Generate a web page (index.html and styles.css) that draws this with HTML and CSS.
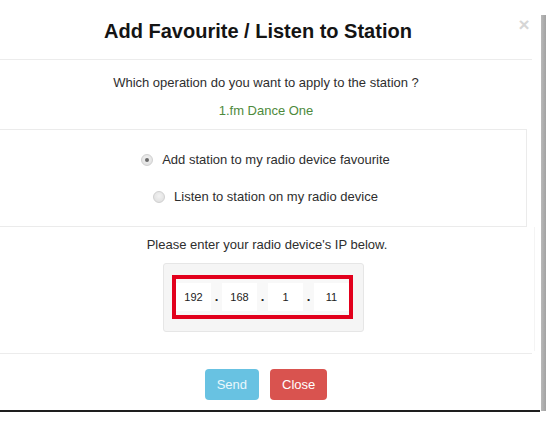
FILE: index.html
```html
<!DOCTYPE html>
<html lang="en">
<head>
<meta charset="utf-8">
<title>Add Favourite / Listen to Station</title>
<link rel="stylesheet" href="styles.css">
</head>
<body>
<div class="screen">
  <div class="modal">
    <div class="modal-header">
      <h4 class="modal-title">Add Favourite / Listen to Station</h4>
      <span class="close">&times;</span>
    </div>
    <div class="intro">
      <p class="question">Which operation do you want to apply to the station ?</p>
      <p class="station">1.fm Dance One</p>
    </div>
    <div class="options">
      <div class="option"><span class="radio checked"></span><span>Add station to my radio device favourite</span></div>
      <div class="option"><span class="radio"></span><span>Listen to station on my radio device</span></div>
    </div>
    <div class="ip-section">
      <p class="ip-label">Please enter your radio device's IP below.</p>
      <div class="well">
        <div class="ip-box">
          <span class="octet">192</span><span class="dot">.</span><span class="octet">168</span><span class="dot">.</span><span class="octet">1</span><span class="dot">.</span><span class="octet">11</span>
        </div>
      </div>
    </div>
    <div class="modal-footer">
      <span class="btn btn-info">Send</span>
      <span class="btn btn-danger">Close</span>
    </div>
  </div>
  <div class="scrollbar"></div>
</div>
</body>
</html>
```
FILE: styles.css
```css
html, body {
  margin: 0;
  padding: 0;
  background: #ffffff;
}
body {
  font-family: "Liberation Sans", Arial, sans-serif;
  color: #333333;
  font-size: 13px;
}
.screen {
  display: flex;
  width: 554px;
  height: 426px;
  overflow: hidden;
}
.modal {
  width: 540px;
  height: 410px;
  display: flex;
  flex-direction: column;
  border-bottom: 2px solid #1e1e1e;
  box-sizing: content-box;
}
.modal > * {
  width: 532px;
  box-sizing: border-box;
}
.scrollbar {
  width: 5px;
  height: 396px;
  margin-top: 15px;
  margin-left: 1px;
  background: linear-gradient(to right, #b9b9b9, #a2a2a2);
}
.modal-header {
  height: 60px;
  display: flex;
  align-items: flex-start;
  border-bottom: 1px solid #ececec;
}
.modal-title {
  flex: 1;
  margin: 20px 0 0;
  font-size: 20px;
  line-height: 22px;
  font-weight: bold;
  color: #141414;
  text-align: center;
}
.close {
  width: 16px;
  margin-top: 14px;
  font-size: 19px;
  line-height: 21px;
  font-weight: bold;
  color: #d6d6d6;
  text-align: center;
}
.intro {
  padding: 14px 0 9px;
  text-align: center;
}
.intro p {
  margin: 0;
  line-height: 18px;
}
.question {
  color: #2e2e2e;
}
.intro .station {
  margin-top: 10px;
  color: #4e8a3c;
}
.options {
  margin: 0;
  width: 527px;
  border: 1px solid #ebebeb;
  border-left: 0;
  padding: 21px 0 20px 5px;
  display: flex;
  flex-direction: column;
  align-items: center;
  gap: 19px;
}
.option {
  display: flex;
  align-items: center;
  gap: 9px;
  line-height: 18px;
  color: #2e2e2e;
}
.radio {
  width: 12px;
  height: 12px;
  border-radius: 50%;
  box-sizing: border-box;
  border: 1px solid #d0d0d0;
  background: radial-gradient(circle at 50% 40%, #f2f2f2, #dcdcdc);
  display: flex;
  align-items: center;
  justify-content: center;
}
.radio.checked::after {
  content: "";
  width: 4px;
  height: 4px;
  border-radius: 50%;
  background: #6a6a6a;
}
.ip-section {
  padding: 9px 0 19px;
  display: flex;
  flex-direction: column;
  align-items: center;
  border-right: 1px solid #f4f4f4;
  margin-right: -3px;
  width: 535px;
}
.ip-label {
  margin: 0;
  line-height: 18px;
  color: #2e2e2e;
}
.well {
  margin-top: 9px;
  margin-right: 7px;
  width: 201px;
  height: 69px;
  box-sizing: border-box;
  background: #f5f5f5;
  border: 1px solid #e6e6e6;
  border-radius: 3px;
  padding: 11px 10px 0 8px;
}
.ip-box {
  height: 44px;
  box-sizing: border-box;
  border: 4px solid #e2001c;
  background: #f8f8f8;
  display: flex;
  align-items: center;
}
.octet {
  width: 35px;
  height: 28px;
  background: #ffffff;
  font-size: 11px;
  line-height: 28px;
  text-align: center;
  color: #222222;
}
.dot {
  width: 11px;
  text-align: center;
  font-size: 13px;
  font-weight: bold;
  line-height: 28px;
  color: #222222;
}
.modal-footer {
  border-top: 1px solid #ececec;
  padding: 15px 0 10px;
  display: flex;
  justify-content: center;
  gap: 11px;
  margin-top: auto;
}
.btn {
  height: 31px;
  line-height: 31px;
  padding: 0 12px;
  border-radius: 4px;
  font-size: 13px;
  color: #ffffff;
}
.btn-info {
  background: #68c2e2;
  color: #eaf7fc;
}
.btn-danger {
  background: #d9534f;
}
```
